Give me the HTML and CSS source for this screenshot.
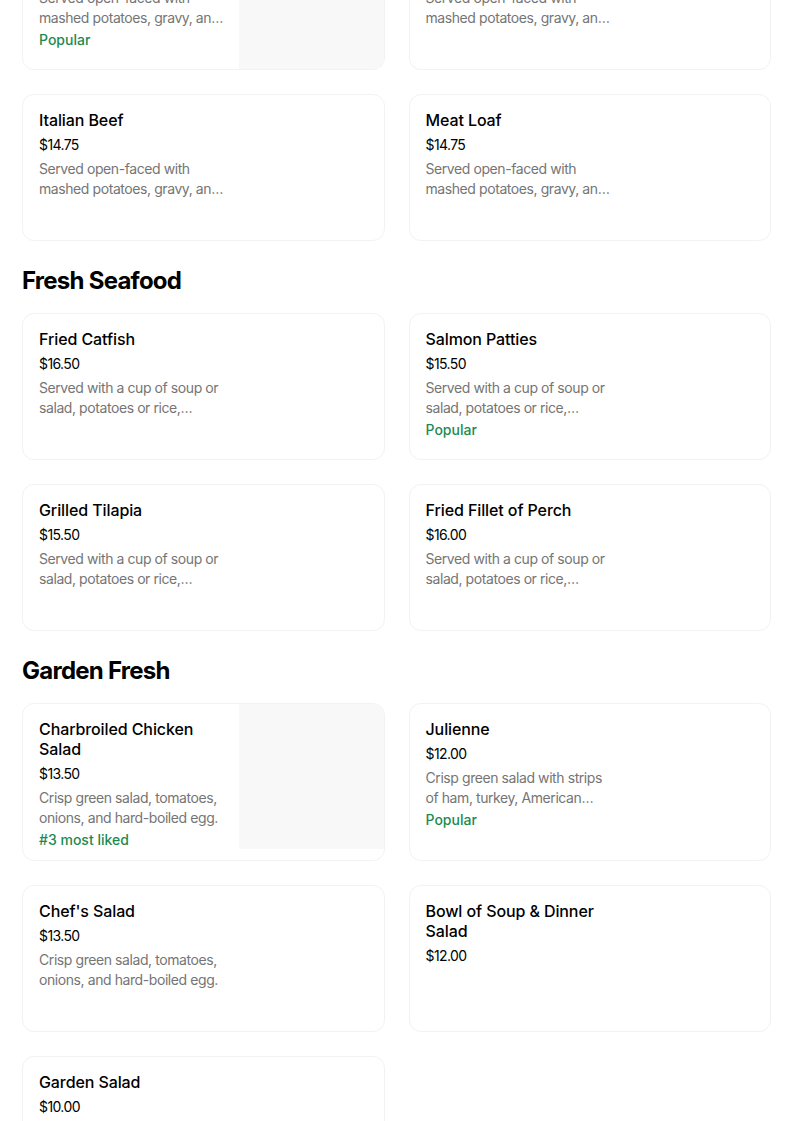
FILE: index.html
```html
<!DOCTYPE html>
<html lang="en">
<head>
<meta charset="utf-8">
<title>Menu</title>
<link rel="stylesheet" href="styles.css">
</head>
<body>
<main class="menu">
  <section class="group">
    <div class="grid">
      <article class="card">
        <div class="info">
          <h3 class="title">Hot Turkey</h3>
          <div class="price">$14.75</div>
          <p class="desc">Served open-faced with mashed potatoes, gravy, and a side of cranberry sauce.</p>
          <div class="tag">Popular</div>
        </div>
        <div class="photo"></div>
      </article>
      <article class="card">
        <div class="info">
          <h3 class="title">Hot Roast Beef</h3>
          <div class="price">$14.75</div>
          <p class="desc">Served open-faced with mashed potatoes, gravy, and a cup of soup or salad.</p>
        </div>
      </article>
      <article class="card">
        <div class="info">
          <h3 class="title">Italian Beef</h3>
          <div class="price">$14.75</div>
          <p class="desc">Served open-faced with mashed potatoes, gravy, and a cup of soup or salad.</p>
        </div>
      </article>
      <article class="card">
        <div class="info">
          <h3 class="title">Meat Loaf</h3>
          <div class="price">$14.75</div>
          <p class="desc">Served open-faced with mashed potatoes, gravy, and a cup of soup or salad.</p>
        </div>
      </article>
    </div>
  </section>

  <section class="group">
    <h2 class="heading">Fresh Seafood</h2>
    <div class="grid">
      <article class="card">
        <div class="info">
          <h3 class="title">Fried Catfish</h3>
          <div class="price">$16.50</div>
          <p class="desc">Served with a cup of soup or salad, potatoes or rice, vegetables, and bread.</p>
        </div>
      </article>
      <article class="card">
        <div class="info">
          <h3 class="title">Salmon Patties</h3>
          <div class="price">$15.50</div>
          <p class="desc">Served with a cup of soup or salad, potatoes or rice, vegetables, and bread.</p>
          <div class="tag">Popular</div>
        </div>
      </article>
      <article class="card">
        <div class="info">
          <h3 class="title">Grilled Tilapia</h3>
          <div class="price">$15.50</div>
          <p class="desc">Served with a cup of soup or salad, potatoes or rice, vegetables, and bread.</p>
        </div>
      </article>
      <article class="card">
        <div class="info">
          <h3 class="title">Fried Fillet of Perch</h3>
          <div class="price">$16.00</div>
          <p class="desc">Served with a cup of soup or salad, potatoes or rice, vegetables, and bread.</p>
        </div>
      </article>
    </div>
  </section>

  <section class="group">
    <h2 class="heading">Garden Fresh</h2>
    <div class="grid">
      <article class="card">
        <div class="info">
          <h3 class="title">Charbroiled Chicken Salad</h3>
          <div class="price">$13.50</div>
          <p class="desc">Crisp green salad, tomatoes, onions, and hard-boiled egg.</p>
          <div class="tag">#3 most liked</div>
        </div>
        <div class="photo"></div>
      </article>
      <article class="card">
        <div class="info">
          <h3 class="title">Julienne</h3>
          <div class="price">$12.00</div>
          <p class="desc">Crisp green salad with strips of ham, turkey, American cheese, and Swiss cheese.</p>
          <div class="tag">Popular</div>
        </div>
      </article>
      <article class="card">
        <div class="info">
          <h3 class="title">Chef's Salad</h3>
          <div class="price">$13.50</div>
          <p class="desc">Crisp green salad, tomatoes, onions, and hard-boiled egg.</p>
        </div>
      </article>
      <article class="card">
        <div class="info">
          <h3 class="title">Bowl of Soup &amp; Dinner Salad</h3>
          <div class="price">$12.00</div>
        </div>
      </article>
      <article class="card">
        <div class="info">
          <h3 class="title">Garden Salad</h3>
          <div class="price">$10.00</div>
          <p class="desc">Crisp green salad with tomatoes, cucumbers and onions.</p>
        </div>
      </article>
    </div>
  </section>
</main>
</body>
</html>
```

FILE: styles.css
```css
* {
  box-sizing: border-box;
}

html, body {
  margin: 0;
  padding: 0;
  background: #ffffff;
}

body {
  font-family: Inter, "Noto Sans", "Liberation Sans", sans-serif;
  color: #000000;
  overflow: hidden;
}

.menu {
  width: 749px;
  margin: -77px 0 0 22px;
}

.group {
  margin-bottom: 24px;
}

.heading {
  margin: 0 0 16px;
  font-size: 24px;
  line-height: 32px;
  font-weight: 700;
  letter-spacing: -0.75px;
}

.grid {
  display: grid;
  grid-template-columns: 1fr 1fr;
  gap: 24px;
}

.card {
  display: flex;
  align-items: flex-start;
  min-height: 147px;
  border: 1px solid #f2f2f2;
  border-radius: 12px;
  background: #ffffff;
  overflow: hidden;
}

.info {
  flex: 1;
  padding: 15px 12px 10px 16px;
  min-width: 0;
}

.info > * {
  max-width: 188px;
}

.title {
  margin: 0;
  font-size: 16px;
  line-height: 20px;
  font-weight: 500;
  letter-spacing: -0.1px;
}

.price {
  margin-top: 5px;
  font-size: 14px;
  line-height: 20px;
  color: #000000;
  letter-spacing: -0.6px;
}

.desc {
  margin: 4px 0 0;
  font-size: 14px;
  line-height: 20px;
  color: #757575;
  letter-spacing: -0.42px;
  display: -webkit-box;
  -webkit-box-orient: vertical;
  -webkit-line-clamp: 2;
  overflow: hidden;
}

.tag {
  margin-top: 2px;
  font-size: 14px;
  line-height: 20px;
  font-weight: 500;
  color: #1e8a4f;
}

.photo {
  flex: none;
  width: 145px;
  height: 145px;
  background: #f8f8f8;
  border-radius: 0 11px 0 0;
}
```
